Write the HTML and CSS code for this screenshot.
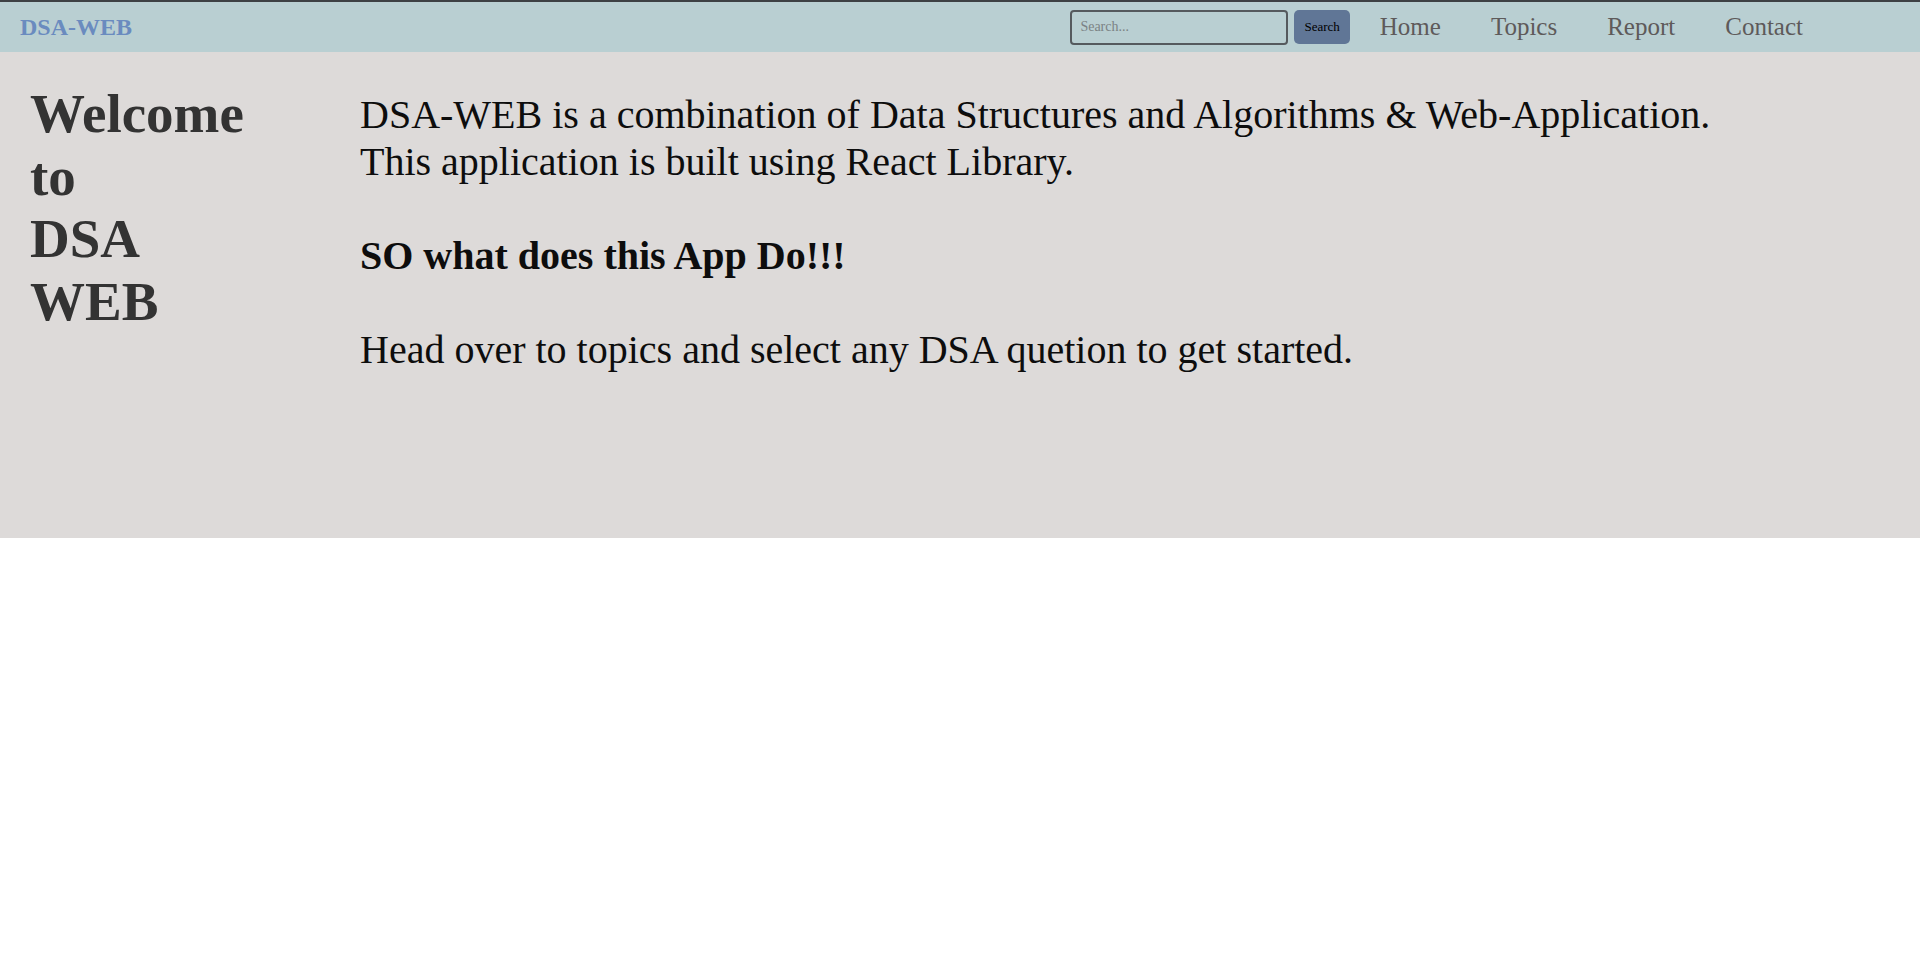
FILE: index.html
```html
<!DOCTYPE html>
<html lang="en">
<head>
<meta charset="utf-8">
<title>DSA-WEB</title>
<link rel="stylesheet" href="styles.css">
</head>
<body>
<header class="navbar">
  <a class="brand" href="#">DSA-WEB</a>
  <div class="nav-right">
    <form class="search">
      <input class="search-input" type="text" placeholder="Search...">
      <button class="search-btn" type="button">Search</button>
    </form>
    <ul class="nav-links">
      <li><a href="#">Home</a></li>
      <li><a href="#">Topics</a></li>
      <li><a href="#">Report</a></li>
      <li><a href="#">Contact</a></li>
    </ul>
  </div>
</header>
<main class="hero">
  <h1 class="hero-title">
    <span class="title-word">Welcome</span>
    <span class="title-word">to</span>
    <span class="title-word">DSA</span>
    <span class="title-word">WEB</span>
  </h1>
  <div class="hero-text">
    <p>DSA-WEB is a combination of Data Structures and Algorithms &amp; Web-Application.<br>This application is built using React Library.</p>
    <p class="hero-strong">SO what does this App Do!!!</p>
    <p>Head over to topics and select any DSA quetion to get started.</p>
  </div>
</main>
</body>
</html>
```
FILE: styles.css
```css
* { box-sizing: border-box; }

html, body {
  margin: 0;
  padding: 0;
  background: #ffffff;
  font-family: "Liberation Serif", "Times New Roman", serif;
}

.navbar {
  height: 52px;
  border-top: 2px solid #3d4044;
  background: #b9cfd2;
  display: flex;
  align-items: center;
  justify-content: space-between;
  padding: 0 117px 0 20px;
}

.brand {
  font-size: 24px;
  font-weight: bold;
  color: #6a8bbf;
  text-decoration: none;
}

.nav-right {
  display: flex;
  align-items: center;
}

.search {
  display: flex;
  align-items: center;
  gap: 6px;
  margin: 0;
}

.search-input {
  width: 218px;
  height: 35px;
  border: 2px solid #555a5e;
  border-radius: 4px;
  background: transparent;
  padding: 0 8px;
  font-family: "Liberation Serif", serif;
  font-size: 14px;
  color: #333;
}

.search-input::placeholder { color: #7b8284; }

.search-btn {
  height: 34px;
  padding: 0 10px;
  border: none;
  border-radius: 5px;
  background: #607696;
  color: #000;
  font-family: "Liberation Serif", serif;
  font-size: 13px;
}

.nav-links {
  list-style: none;
  margin: 0 0 0 30px;
  padding: 0;
  display: flex;
  gap: 50px;
}

.nav-links a {
  font-size: 25px;
  color: #5e5a5a;
  text-decoration: none;
}

.hero {
  min-height: 486px;
  background: #dddad9;
  display: grid;
  grid-template-columns: 330px 1fr;
  align-items: start;
  padding: 31px 0 0 30px;
}

.hero-title {
  margin: 0;
  font-size: 55px;
  line-height: 62.7px;
  font-weight: bold;
  color: #333333;
}

.title-word { display: block; }

.hero-text {
  margin-top: 8px;
  display: flex;
  flex-direction: column;
  gap: 47px;
  font-size: 40px;
  line-height: 47px;
  color: #0d0d0d;
}

.hero-text p { margin: 0; }

.hero-strong { font-weight: bold; }
```
